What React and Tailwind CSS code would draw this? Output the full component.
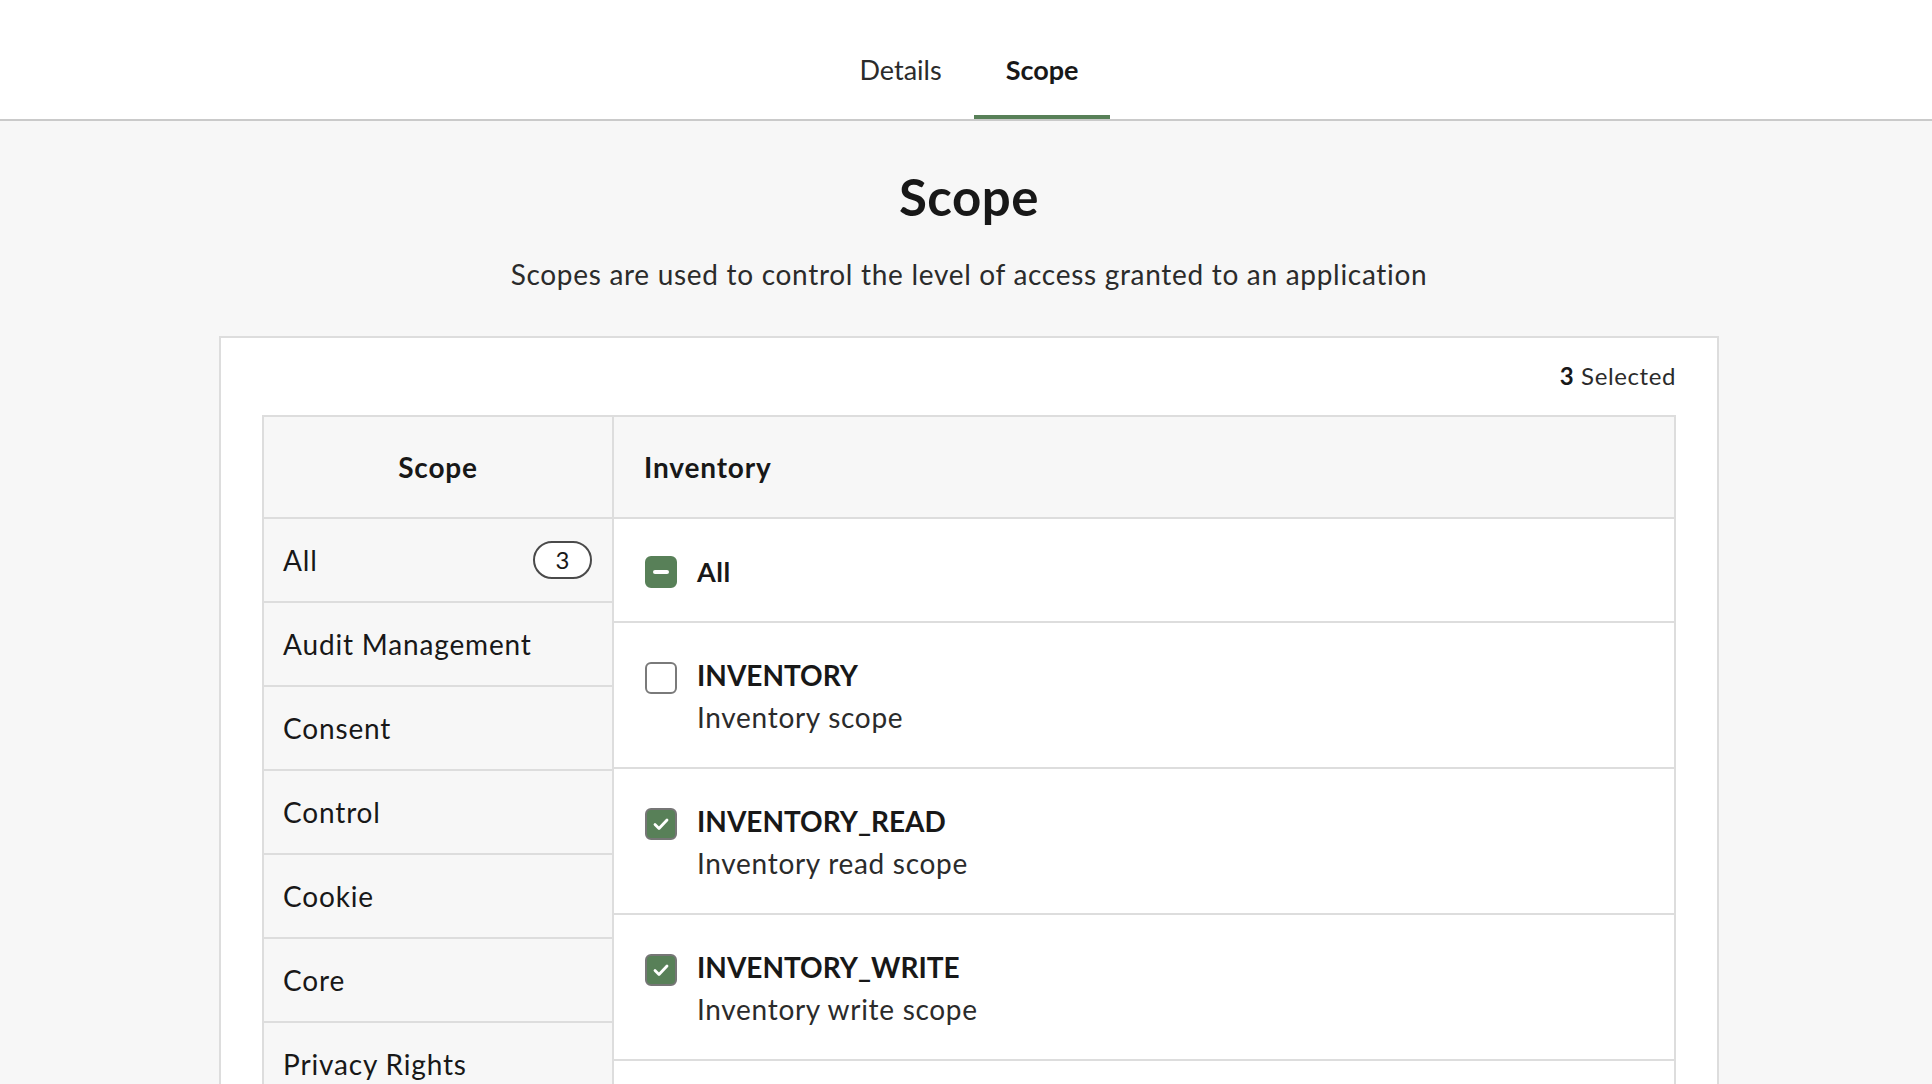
import React from "react";

const leftItems = ["All", "Audit Management", "Consent", "Control", "Cookie", "Core", "Privacy Rights"];

const scopes = [
  { name: "INVENTORY", desc: "Inventory scope", checked: false },
  { name: "INVENTORY_READ", desc: "Inventory read scope", checked: true },
  { name: "INVENTORY_WRITE", desc: "Inventory write scope", checked: true },
];

function Box({ state }) {
  if (state === "mixed") {
    return (
      <span className="flex h-[32px] w-[32px] shrink-0 items-center justify-center rounded-[6px] border-2 border-[#588058] bg-[#588058]">
        <span className="block h-[4px] w-[16px] rounded-full bg-white" />
      </span>
    );
  }
  if (state === "checked") {
    return (
      <span className="flex h-[32px] w-[32px] shrink-0 items-center justify-center rounded-[6px] border-2 border-[#767676] bg-[#588058]">
        <svg width="18" height="18" viewBox="0 0 18 18" fill="none">
          <path d="M3 9.5l4 4 8-8.5" stroke="white" strokeWidth="2.8" strokeLinecap="round" strokeLinejoin="round" />
        </svg>
      </span>
    );
  }
  return <span className="block h-[32px] w-[32px] shrink-0 rounded-[6px] border-2 border-[#7a7a7a] bg-white" />;
}

export default function App() {
  return (
    <div
      className="h-[1084px] overflow-hidden bg-[#f7f7f7] text-[#181818]"
      style={{ fontFamily: "Lato, 'Open Sans', sans-serif" }}
    >
      <header className="h-[121px] border-b-2 border-[#cacaca] bg-white">
        <div className="ml-[219px] flex h-full w-[1500px] items-end justify-center">
          <div className="flex h-[100px] items-center border-b-4 border-transparent px-8 pt-[6px] text-[27px] text-[#2b2b2b]">
            Details
          </div>
          <div className="flex h-[100px] items-center border-b-4 border-[#588058] px-8 pt-[6px] text-[27px] font-bold text-[#181818]">
            Scope
          </div>
        </div>
      </header>

      <main className="ml-[219px] w-[1500px]">
        <h1 className="mt-[46px] text-center text-[51px] font-bold leading-[60px] tracking-[0.01em]">Scope</h1>
        <p className="mt-[29px] text-center text-[28px] leading-[36px] tracking-[0.025em] text-[#2b2b2b]">
          Scopes are used to control the level of access granted to an application
        </p>

        <section className="mt-[44px] border-2 border-[#dddddd] bg-white px-[41px] pt-[22px]">
          <div className="mb-[23px] text-right text-[24px] leading-[32px] tracking-[0.025em] text-[#2b2b2b]">
            <span className="font-bold text-[#181818]">3</span> Selected
          </div>

          <div className="flex border-2 border-[#dddddd]">
            <div className="w-[350px] shrink-0 border-r-2 border-[#dddddd] bg-[#f7f7f7]">
              <div className="flex h-[102px] items-center justify-center border-b-2 border-[#dddddd] text-[28px] font-bold tracking-[0.03em]">
                Scope
              </div>
              {leftItems.map((item) => (
                <div
                  key={item}
                  className="flex h-[84px] items-center justify-between border-b-2 border-[#dddddd] pl-[19px] pr-[20px] text-[28px] tracking-[0.03em]"
                >
                  <span>{item}</span>
                  {item === "All" && (
                    <span className="flex h-[38px] w-[59px] items-center justify-center rounded-full border-2 border-[#4a4a4a] bg-white text-[24px] leading-none tracking-normal">
                      3
                    </span>
                  )}
                </div>
              ))}
            </div>

            <div className="flex-1">
              <div className="flex h-[102px] items-center border-b-2 border-[#dddddd] bg-[#f7f7f7] pl-[30px] text-[28px] font-bold tracking-[0.03em]">
                Inventory
              </div>
              <div className="flex h-[104px] items-center gap-[20px] border-b-2 border-[#dddddd] pl-[31px] pt-[4px]">
                <Box state="mixed" />
                <span className="text-[27px] font-bold tracking-[0.02em]">All</span>
              </div>
              {scopes.map((s) => (
                <div key={s.name} className="flex gap-[20px] border-b-2 border-[#dddddd] pb-[29px] pl-[31px] pt-[31px]">
                  <div className="mt-[8px]">
                    <Box state={s.checked ? "checked" : "unchecked"} />
                  </div>
                  <div className="leading-[42px]">
                    <div className="text-[28px] font-bold">{s.name}</div>
                    <div className="text-[28px] tracking-[0.025em] text-[#2b2b2b]">{s.desc}</div>
                  </div>
                </div>
              ))}
              <div className="h-[146px]" />
            </div>
          </div>
        </section>
      </main>
    </div>
  );
}
